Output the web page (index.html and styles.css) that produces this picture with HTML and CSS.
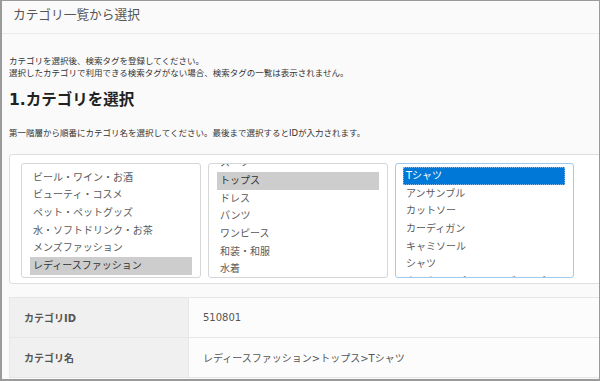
FILE: index.html
```html
<!DOCTYPE html>
<html lang="ja">
<head>
<meta charset="utf-8">
<link rel="stylesheet" href="styles.css">
</head>
<body>
<div class="frame">
  <div class="header"><h1 class="title">カテゴリ一覧から選択</h1></div>
  <div class="content">
    <p class="intro">カテゴリを選択後、検索タグを登録してください。<br>選択したカテゴリで利用できる検索タグがない場合、検索タグの一覧は表示されません。</p>
    <h2 class="heading">1.カテゴリを選択</h2>
    <p class="note">第一階層から順番にカテゴリ名を選択してください。最後まで選択するとIDが入力されます。</p>
    <div class="panel">
      <div class="select">
        <ul class="list list-1">
          <li>ビール・ワイン・お酒</li>
          <li>ビューティ・コスメ</li>
          <li>ペット・ペットグッズ</li>
          <li>水・ソフトドリンク・お茶</li>
          <li>メンズファッション</li>
          <li class="sel">レディースファッション</li>
        </ul>
      </div>
      <div class="select">
        <ul class="list list-2">
          <li>スーツ</li>
          <li class="sel">トップス</li>
          <li>ドレス</li>
          <li>パンツ</li>
          <li>ワンピース</li>
          <li>和装・和服</li>
          <li>水着</li>
        </ul>
      </div>
      <div class="select focus">
        <ul class="list list-3">
          <li class="active">Tシャツ</li>
          <li>アンサンブル</li>
          <li>カットソー</li>
          <li>カーディガン</li>
          <li>キャミソール</li>
          <li>シャツ</li>
          <li>タンクトップ・チューブトップ</li>
        </ul>
      </div>
    </div>
    <table class="info">
      <tr><th>カテゴリID</th><td>510801</td></tr>
      <tr><th>カテゴリ名</th><td>レディースファッション&gt;トップス&gt;Tシャツ</td></tr>
    </table>
  </div>
</div>
</body>
</html>
```
FILE: styles.css
```css
html, body {
  margin: 0;
  padding: 0;
}
body {
  font-family: "DejaVu Sans", "Noto Sans CJK JP", sans-serif;
  color: #333;
}
.frame {
  width: 600px;
  height: 381px;
  box-sizing: border-box;
  border-style: solid;
  border-color: #9a9a9a;
  border-width: 1px 1px 2px 2px;
  background: #fafafa;
  overflow: hidden;
}
.header {
  height: 32px;
  border-bottom: 1px solid #ebebeb;
}
.title {
  margin: 0;
  padding-left: 11px;
  font-size: 12.7px;
  font-weight: normal;
  line-height: 28px;
  color: #555;
}
.content {
  padding-left: 7px;
}
.intro {
  margin: 21px 0 0;
  font-size: 8.5px;
  line-height: 12px;
  color: #333;
}
.heading {
  margin: 11px 0 0;
  font-size: 15.5px;
  line-height: 20px;
  font-weight: bold;
  color: #222;
}
.note {
  margin: 17px 0 0;
  font-size: 8.5px;
  line-height: 12px;
  color: #333;
}
.panel {
  margin-top: 15px;
  width: 620px;
  box-sizing: border-box;
  background: #fff;
  border: 1px solid #dedede;
  border-radius: 3px;
  padding: 8px 0 5px 11px;
  display: flex;
  gap: 7px;
}
.select {
  width: 180px;
  height: 115px;
  box-sizing: border-box;
  border: 1px solid #d6d6d6;
  border-radius: 3px;
  background: #fff;
  overflow: hidden;
  padding: 0 8px;
}
.select.focus {
  width: 179px;
  border-color: #9fcbef;
  padding: 0 8px 0 7px;
}
.list {
  list-style: none;
  margin: 0;
  padding: 0;
  font-size: 10px;
  line-height: 17.7px;
  color: #5a5a5a;
}
.list li {
  padding-left: 3px;
  white-space: nowrap;
  height: 17.7px;
}
.list-1 { margin-top: 4.5px; }
.list-2 { margin-top: -9.7px; }
.list-3 { margin-top: 3px; }
.list li.sel {
  background: #cdcdcd;
  color: #333;
}
.list li.active {
  background: #0078d7;
  color: #fff;
  outline: 1px dotted #7fb6e6;
  outline-offset: -1px;
}
.info {
  margin-top: 13px;
  width: 620px;
  border-collapse: collapse;
  font-size: 10px;
}
.info th,
.info td {
  height: 39px;
  padding: 0;
  border: 1px solid #e6e6e6;
  text-align: left;
  vertical-align: middle;
}
.info th {
  width: 164px;
  padding-left: 14px;
  background: #f0f0f0;
  color: #555;
  font-weight: bold;
}
.info td {
  padding-left: 14px;
  background: #fcfcfc;
  color: #555;
}
```
